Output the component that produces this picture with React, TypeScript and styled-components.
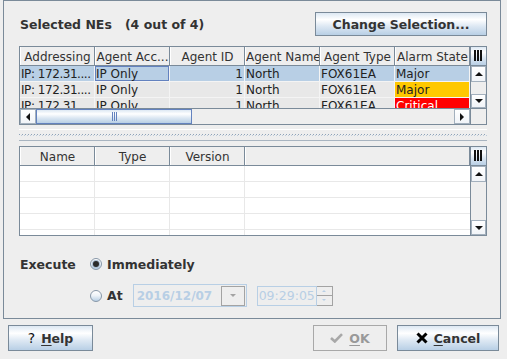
import React from 'react';
import styled, { createGlobalStyle, css } from 'styled-components';

const GlobalStyle = createGlobalStyle`
  * {
    box-sizing: border-box;
  }

  html,
  body {
    margin: 0;
    padding: 0;
    background: #eeeeee;
  }

  body {
    font-family: 'DejaVu Sans', 'Liberation Sans', sans-serif;
    color: #222222;
  }
`;

const ocean = css`
  background: linear-gradient(
    to bottom,
    #dde8f3 0%,
    #ffffff 30%,
    #dde8f3 60%,
    #b8cfe5 100%
  );
`;

const Dialog = styled.div`
  width: 507px;
  height: 359px;
  display: flex;
  flex-direction: column;
  background: #eeeeee;
  overflow: hidden;
`;

const MainPanel = styled.div`
  margin: 0 6px 0 3px;
  height: 319px;
  flex-shrink: 0;
  border: 1px solid #7a8a99;
  padding: 11px 13px 0 15px;
  display: flex;
  flex-direction: column;
`;

const TopRow = styled.div`
  display: flex;
  align-items: center;
  justify-content: space-between;
  height: 24px;
  margin-bottom: 10px;
`;

const Title = styled.div`
  font-size: 12.5px;
  font-weight: bold;
  white-space: pre;
  padding-left: 1px;
  color: #333333;
`;

const DialogButton = styled.button<{ $width: number; $height: number; $off?: boolean }>`
  width: ${(p) => p.$width}px;
  height: ${(p) => p.$height}px;
  flex-shrink: 0;
  padding: 0;
  border: 1px solid ${(p) => (p.$off ? '#a8a8a8' : '#7a8a99')};
  ${(p) => (p.$off ? 'background: #eeeeee;' : ocean)}
  display: flex;
  align-items: center;
  justify-content: center;
  gap: 6px;
  font-family: inherit;
  font-size: 12.5px;
  font-weight: bold;
  color: ${(p) => (p.$off ? '#999999' : '#333333')};

  u {
    text-underline-offset: 2px;
  }
`;

const QuestionMark = styled.span`
  font-size: 14px;
  font-weight: normal;
  color: #111111;
`;

/* tables */

const TableFrame = styled.div<{ $rows: string }>`
  width: 468px;
  flex-shrink: 0;
  border: 1px solid #7a8a99;
  display: grid;
  grid-template-columns: 450px 16px;
  grid-template-rows: ${(p) => p.$rows};
  background: #eeeeee;
`;

const HeaderRow = styled.div`
  display: flex;
  border-bottom: 1px solid #7a8a99;
  background: #eeeeee;
  overflow: hidden;
`;

const HeaderCell = styled.div<{ $width: number }>`
  width: ${(p) => p.$width}px;
  flex-shrink: 0;
  height: 18px;
  border-left: 1px solid #ffffff;
  border-right: 1px solid #7a8a99;
  padding-top: 2px;
  font-size: 12px;
  line-height: 16px;
  text-align: center;
  white-space: nowrap;
  overflow: hidden;
  color: #333333;
`;

const ColumnCorner = styled.div`
  border-left: 1px solid #7a8a99;
  border-bottom: 1px solid #7a8a99;
  ${ocean}
  display: flex;
  align-items: center;
  padding-left: 2px;
`;

const Viewport = styled.div<{ $bg: string }>`
  overflow: hidden;
  background: ${(p) => p.$bg};
`;

const Row = styled.div<{ $bg: string; $grid: string }>`
  display: flex;
  height: 16px;
  background: ${(p) => p.$bg};
  border-bottom: 1px solid ${(p) => p.$grid};
`;

const Cell = styled.div<{
  $width: number;
  $grid: string;
  $align?: 'left' | 'right';
  $bg?: string;
  $color?: string;
  $focus?: boolean;
  $last?: boolean;
  $tight?: boolean;
}>`
  width: ${(p) => p.$width}px;
  flex-shrink: 0;
  height: 15px;
  border-right: ${(p) => (p.$last ? 'none' : `1px solid ${p.$grid}`)};
  padding: 0 1px;
  font-size: 12px;
  line-height: 16px;
  letter-spacing: ${(p) => (p.$tight ? '-0.45px' : 'normal')};
  text-align: ${(p) => p.$align ?? 'left'};
  white-space: nowrap;
  overflow: hidden;
  background: ${(p) => p.$bg ?? 'transparent'};
  color: ${(p) => p.$color ?? '#222222'};
  ${(p) => p.$focus && 'box-shadow: inset 0 0 0 1px #6382bf;'}
`;

const VScroll = styled.div`
  display: flex;
  flex-direction: column;
  border-left: 1px solid #7a8a99;
  background: #eeeeee;
  overflow: hidden;
`;

const HScroll = styled.div`
  display: flex;
  border-top: 1px solid #7a8a99;
  background: #eeeeee;
`;

const ScrollCorner = styled.div`
  border-top: 1px solid #7a8a99;
  border-left: 1px solid #7a8a99;
  background: #eeeeee;
`;

const ScrollButton = styled.div<{ $size: number }>`
  flex: 0 0 ${(p) => p.$size}px;
  display: flex;
  align-items: center;
  justify-content: center;
  background: linear-gradient(to bottom, #ffffff, #f1f4f8);
  border: 1px solid #a3b0bd;
`;

const Track = styled.div`
  flex: 1;
  background: #eeeeee;
`;

const Thumb = styled.div<{ $size: number }>`
  flex: 0 0 ${(p) => p.$size}px;
  border: 1px solid #6382bf;
  ${ocean}
  display: flex;
  align-items: center;
  justify-content: center;
`;

type Dir = 'up' | 'down' | 'left' | 'right';

const Arrow = styled.span<{ $dir: Dir; $size?: number; $color?: string }>`
  width: 0;
  height: 0;
  ${(p) => {
    const s = p.$size ?? 4;
    const c = p.$color ?? '#111111';
    const t = `${s}px solid transparent`;
    switch (p.$dir) {
      case 'up':
        return `border-left: ${t}; border-right: ${t}; border-bottom: ${s}px solid ${c};`;
      case 'down':
        return `border-left: ${t}; border-right: ${t}; border-top: ${s}px solid ${c};`;
      case 'left':
        return `border-top: ${t}; border-bottom: ${t}; border-right: ${s}px solid ${c};`;
      default:
        return `border-top: ${t}; border-bottom: ${t}; border-left: ${s}px solid ${c};`;
    }
  }}
`;

const SplitDivider = styled.div`
  width: 468px;
  margin: 4px 0 5px;
  height: 12px;
  border-top: 1px solid #ffffff;
  border-bottom: 1px solid #a8b4c0;
  display: flex;
  align-items: center;
`;

const Bumps = styled.div`
  flex: 1;
  height: 2px;
  background:
    repeating-linear-gradient(90deg, #8fa3b8 0 1px, transparent 1px 3px) top / 100% 1px no-repeat,
    repeating-linear-gradient(90deg, transparent 0 2px, #bccbdb 2px 3px) bottom / 100% 1px no-repeat;
`;

/* execute options */

const ExecuteGrid = styled.div`
  margin-top: 18px;
  display: grid;
  grid-template-columns: 71px auto;
  grid-template-rows: 20px 23px;
  row-gap: 10px;
  align-items: center;
`;

const FieldLabel = styled.div`
  font-size: 12.5px;
  font-weight: bold;
  padding-left: 1px;
  color: #333333;
`;

const Options = styled.div`
  display: flex;
  align-items: center;
  gap: 10px;
`;

const Option = styled.label`
  display: flex;
  align-items: center;
  gap: 5px;
  font-size: 12.5px;
  font-weight: bold;
  color: #333333;
`;

const Radio = styled.span<{ $checked?: boolean }>`
  width: 12px;
  height: 12px;
  flex-shrink: 0;
  border-radius: 50%;
  border: 1px solid #8797a8;
  background: linear-gradient(to bottom, #ffffff 0%, #eef3f8 45%, #b8cfe5 100%);
  display: inline-flex;
  align-items: center;
  justify-content: center;

  &::after {
    content: '';
    display: ${(p) => (p.$checked ? 'block' : 'none')};
    width: 6px;
    height: 6px;
    border-radius: 50%;
    background: #2b2b2b;
    box-shadow: 0 0 0 1px #a9bcd2;
  }
`;

const Combo = styled.div`
  width: 114px;
  height: 23px;
  border: 1px solid #b8cfe5;
  display: flex;
  align-items: center;
  padding-right: 1px;
`;

const FieldText = styled.div<{ $bold?: boolean; $size: number }>`
  flex: 1;
  padding-left: ${(p) => (p.$bold ? 3 : 1)}px;
  font-size: ${(p) => p.$size}px;
  font-weight: ${(p) => (p.$bold ? 'bold' : 'normal')};
  color: #b8cfe5;
  white-space: nowrap;
`;

const ComboButton = styled.div`
  width: 24px;
  height: 20px;
  border: 1px solid #a3a3a3;
  background: #eeeeee;
  display: flex;
  align-items: center;
  justify-content: center;
`;

const Spinner = styled.div`
  display: flex;
  height: 20px;
`;

const TimeField = styled.div`
  width: 60px;
  height: 20px;
  border: 1px solid #b8cfe5;
  display: flex;
  align-items: center;
`;

const SpinButtons = styled.div`
  width: 16px;
  display: flex;
  flex-direction: column;
  border: 1px solid #a3a3a3;
  border-left: none;
`;

const SpinButton = styled.div<{ $top?: boolean }>`
  flex: 1;
  display: flex;
  align-items: center;
  justify-content: center;
  border-bottom: ${(p) => (p.$top ? '1px solid #a3a3a3' : 'none')};
  background: #eeeeee;
`;

const ButtonBar = styled.div`
  display: flex;
  gap: 10px;
  padding: 6px 8px 0;

  & > :nth-child(2) {
    margin-left: auto;
  }
`;

const topColumns = ['Addressing', 'Agent Acc...', 'Agent ID', 'Agent Name', 'Agent Type', 'Alarm State'];

const neRows = [
  { alarm: 'Major', selected: true },
  { alarm: 'Major', selected: false },
  { alarm: 'Critical', selected: false },
];

const alarmColors: Record<string, { bg: string; fg: string }> = {
  Major: { bg: '#ffc800', fg: '#222222' },
  Critical: { bg: '#ff0000', fg: '#ffffff' },
};

const ColumnControl = () => (
  <svg width="10" height="12" viewBox="0 0 10 12">
    <rect x="1" y="0" width="2" height="11" fill="#111" />
    <rect x="4" y="0" width="2" height="11" fill="#111" />
    <rect x="7" y="0" width="2" height="11" fill="#111" />
  </svg>
);

const Grip = () => (
  <svg width="5" height="9" viewBox="0 0 5 9">
    <rect x="0" y="0" width="1" height="9" fill="#6382bf" />
    <rect x="2" y="0" width="1" height="9" fill="#6382bf" />
    <rect x="4" y="0" width="1" height="9" fill="#6382bf" />
  </svg>
);

const CrossIcon = () => (
  <svg width="12" height="12" viewBox="0 0 12 12">
    <path d="M1.5 1.5 L10.5 10.5 M10.5 1.5 L1.5 10.5" stroke="#000" strokeWidth="3" />
  </svg>
);

const CheckIcon = () => (
  <svg width="13" height="10" viewBox="0 0 13 10">
    <path d="M1 5 L4.8 8.5 L12 1.2" stroke="#a8a8a8" strokeWidth="2.6" fill="none" />
  </svg>
);

const App = () => {
  const grid1 = '#f4f4f4';
  const grid2 = '#e8e8e8';

  return (
    <Dialog>
      <GlobalStyle />
      <MainPanel>
        <TopRow>
          <Title>{'Selected NEs   (4 out of 4)'}</Title>
          <DialogButton $width={172} $height={24}>
            Change Selection...
          </DialogButton>
        </TopRow>

        <TableFrame $rows="19px 42px 16px">
          <HeaderRow>
            {topColumns.map((c) => (
              <HeaderCell key={c} $width={75}>
                {c}
              </HeaderCell>
            ))}
          </HeaderRow>
          <ColumnCorner>
            <ColumnControl />
          </ColumnCorner>

          <Viewport $bg="#ffffff">
            {neRows.map((r, i) => {
              const rowBg = r.selected ? '#b8cfe5' : '#e8e8e8';
              const alarm = r.selected ? undefined : alarmColors[r.alarm];
              return (
                <Row key={i} $bg={rowBg} $grid={grid1}>
                  <Cell $width={75} $grid={grid1} $tight>
                    IP: 172.31....
                  </Cell>
                  <Cell $width={75} $grid={grid1} $focus={r.selected}>
                    IP Only
                  </Cell>
                  <Cell $width={75} $grid={grid1} $align="right">
                    1
                  </Cell>
                  <Cell $width={75} $grid={grid1}>North</Cell>
                  <Cell $width={75} $grid={grid1}>FOX61EA</Cell>
                  <Cell $width={75} $grid={grid1} $bg={alarm?.bg} $color={alarm?.fg}>
                    {r.alarm}
                  </Cell>
                </Row>
              );
            })}
          </Viewport>
          <VScroll>
            <ScrollButton $size={16}>
              <Arrow $dir="up" />
            </ScrollButton>
            <Track />
            <ScrollButton $size={14}>
              <Arrow $dir="down" />
            </ScrollButton>
          </VScroll>

          <HScroll>
            <ScrollButton $size={16}>
              <Arrow $dir="left" />
            </ScrollButton>
            <Thumb $size={156}>
              <Grip />
            </Thumb>
            <Track />
            <ScrollButton $size={16}>
              <Arrow $dir="right" />
            </ScrollButton>
          </HScroll>
          <ScrollCorner />
        </TableFrame>

        <SplitDivider>
          <Bumps />
        </SplitDivider>

        <TableFrame $rows="19px 69px">
          <HeaderRow>
            <HeaderCell $width={75}>Name</HeaderCell>
            <HeaderCell $width={75}>Type</HeaderCell>
            <HeaderCell $width={75}>Version</HeaderCell>
            <HeaderCell $width={225} />
          </HeaderRow>
          <ColumnCorner>
            <ColumnControl />
          </ColumnCorner>

          <Viewport $bg="#ffffff">
            {[0, 1, 2, 3, 4].map((i) => (
              <Row key={i} $bg="#ffffff" $grid={grid2}>
                <Cell $width={75} $grid={grid2} />
                <Cell $width={75} $grid={grid2} />
                <Cell $width={75} $grid={grid2} />
                <Cell $width={225} $grid={grid2} $last />
              </Row>
            ))}
          </Viewport>
          <VScroll>
            <ScrollButton $size={16}>
              <Arrow $dir="up" />
            </ScrollButton>
            <Track />
            <ScrollButton $size={15}>
              <Arrow $dir="down" />
            </ScrollButton>
          </VScroll>
        </TableFrame>

        <ExecuteGrid>
          <FieldLabel>Execute</FieldLabel>
          <Option>
            <Radio $checked />
            Immediately
          </Option>
          <div />
          <Options>
            <Option>
              <Radio />
              At
            </Option>
            <Combo>
              <FieldText $bold $size={12}>
                2016/12/07
              </FieldText>
              <ComboButton>
                <Arrow $dir="down" $size={3} $color="#a3a3a3" />
              </ComboButton>
            </Combo>
            <Spinner>
              <TimeField>
                <FieldText $size={12.5}>09:29:05</FieldText>
              </TimeField>
              <SpinButtons>
                <SpinButton $top>
                  <Arrow $dir="up" $size={2} $color="#b8cfe5" />
                </SpinButton>
                <SpinButton>
                  <Arrow $dir="down" $size={2} $color="#b8cfe5" />
                </SpinButton>
              </SpinButtons>
            </Spinner>
          </Options>
        </ExecuteGrid>
      </MainPanel>

      <ButtonBar>
        <DialogButton $width={85} $height={26}>
          <QuestionMark>?</QuestionMark>
          <span>
            <u>H</u>elp
          </span>
        </DialogButton>
        <DialogButton $width={74} $height={26} $off>
          <CheckIcon />
          <span>
            <u>O</u>K
          </span>
        </DialogButton>
        <DialogButton $width={102} $height={26}>
          <CrossIcon />
          <span>
            <u>C</u>ancel
          </span>
        </DialogButton>
      </ButtonBar>
    </Dialog>
  );
};

export default App;
